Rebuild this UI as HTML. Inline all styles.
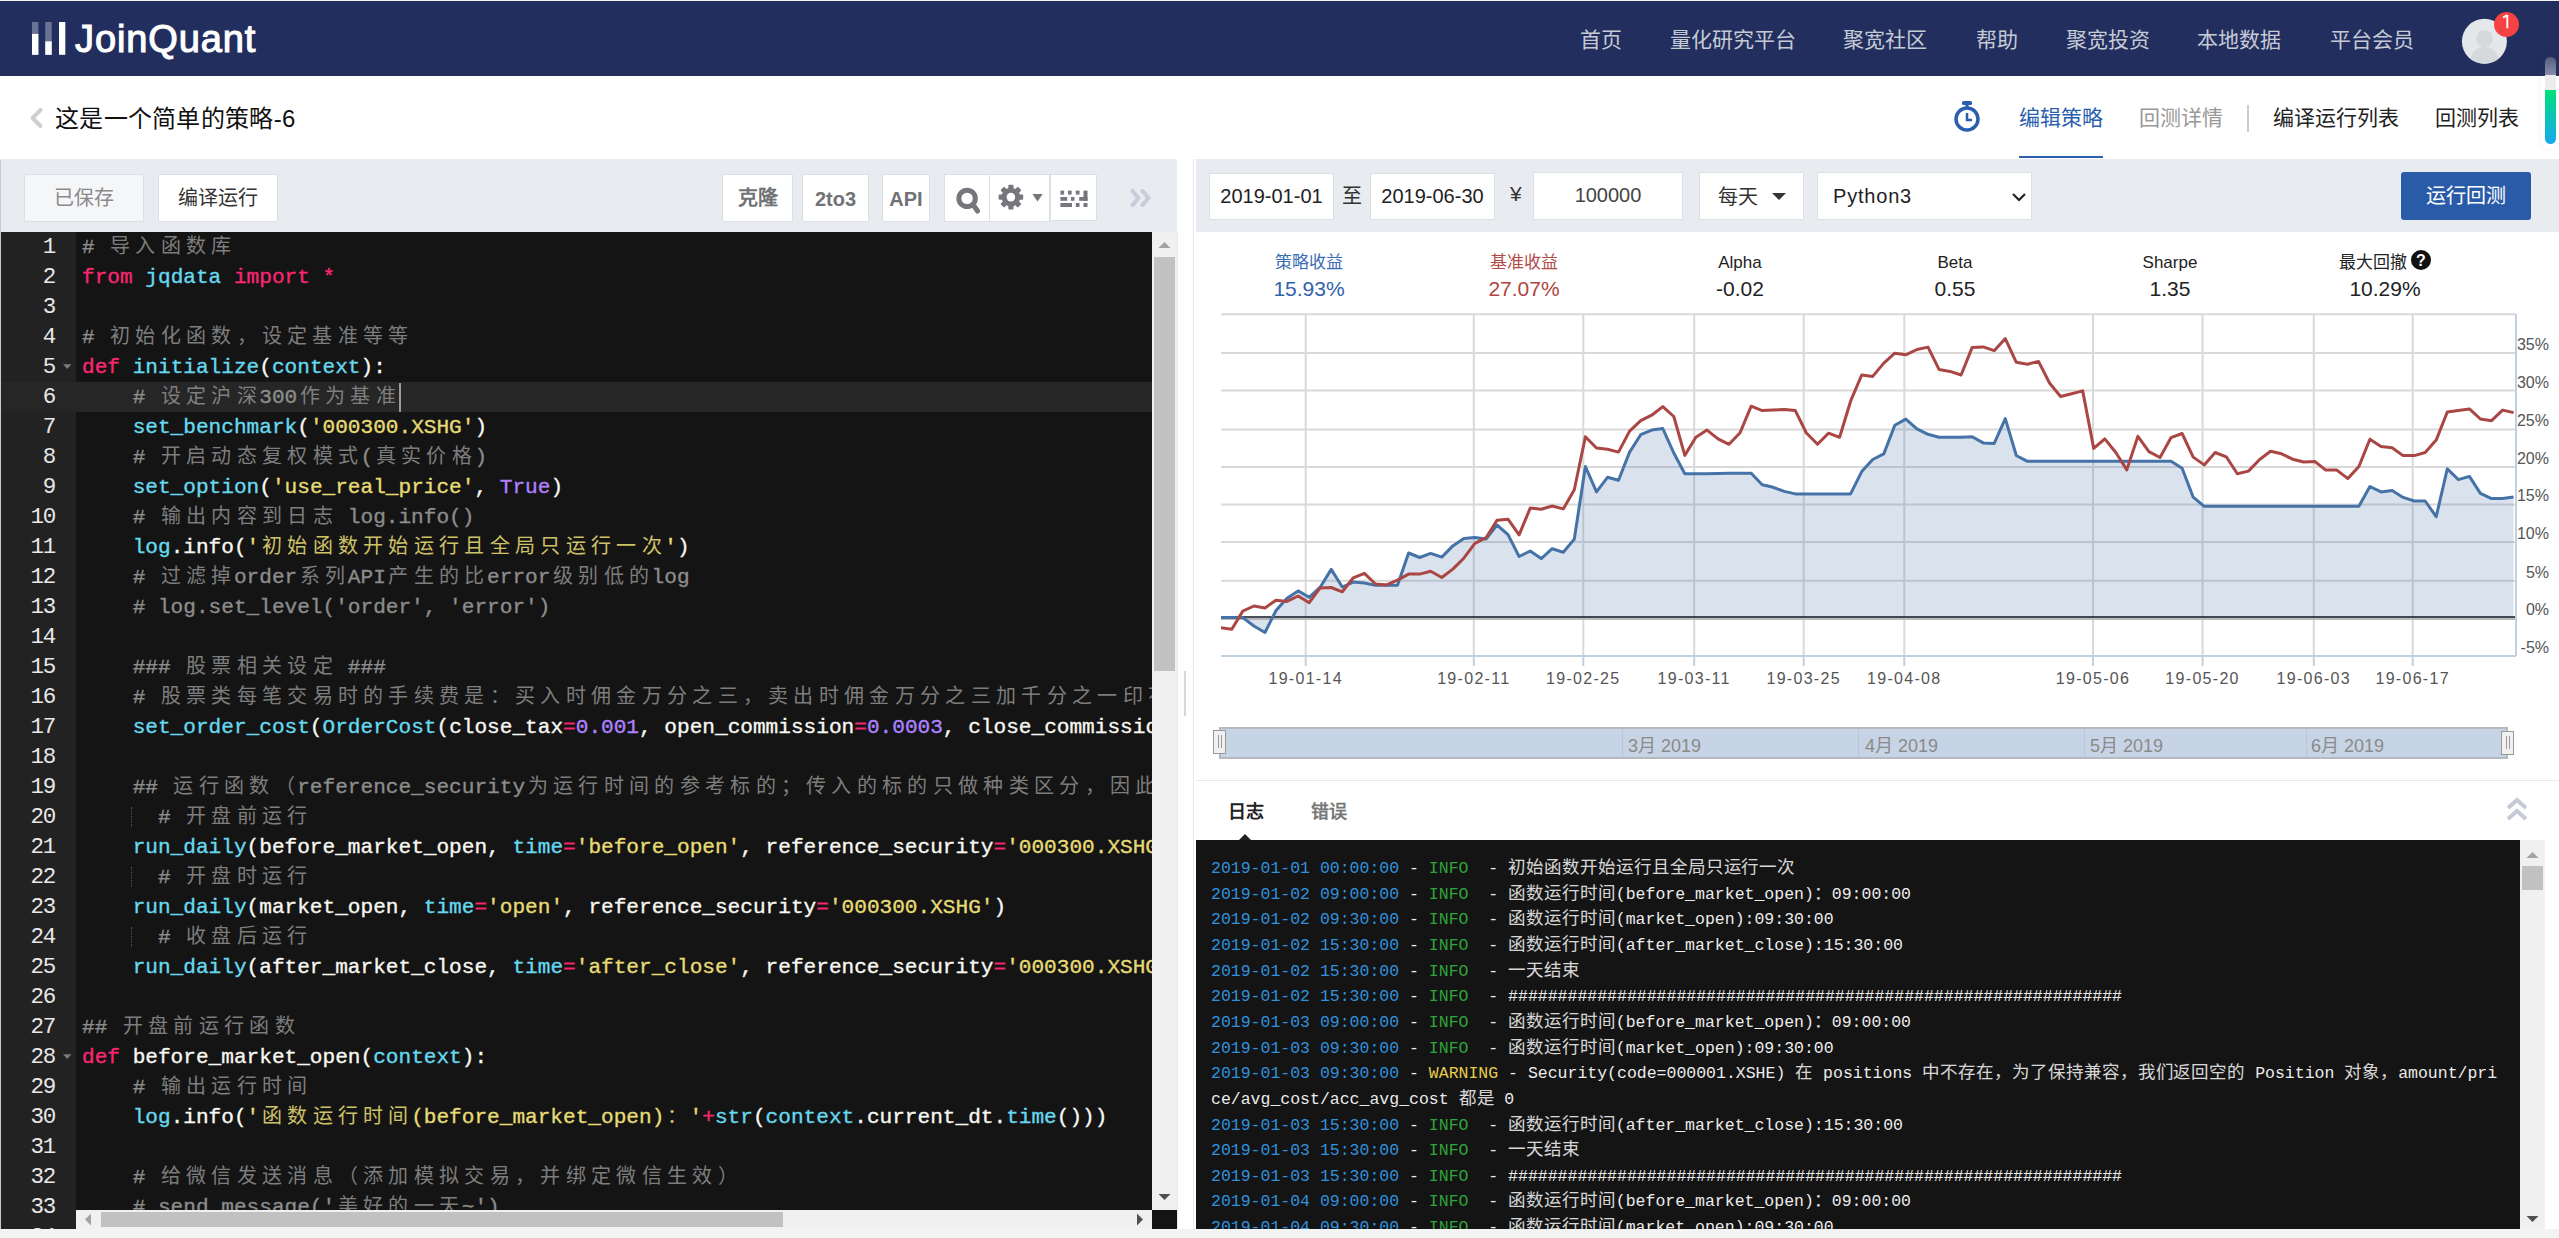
<!DOCTYPE html>
<html lang="zh-CN"><head><meta charset="utf-8"><style>
*{box-sizing:border-box;margin:0;padding:0}
html,body{width:2559px;height:1238px;overflow:hidden;background:#fff;font-family:"Liberation Sans",sans-serif;position:relative}
.a{position:absolute}
/* header */
#hdr{left:0;top:0;width:2559px;height:76px;background:#222f5e;border-top:1px solid #f0f2ee}
.logo{left:32px;top:22px}
.logotxt{left:75px;top:15.5px;color:#fff;font-size:38px;font-weight:normal;letter-spacing:0.9px;line-height:46px;-webkit-text-stroke:1.1px #fff}
.nav{top:26px;color:#c6cad6;font-size:21px;line-height:28px;white-space:nowrap}
.avatar{left:2462px;top:17px;width:46px;height:46px;border-radius:50%;background:#e4e6ea;overflow:hidden}
.badge{left:2494px;top:11.8px;width:25px;height:25px;border-radius:50%;background:#f64242;color:#fff;font-size:16px;line-height:25px;text-align:center}
/* title bar */
.title{left:55px;top:104px;letter-spacing:0.3px;font-size:24px;line-height:30px;color:#111;white-space:nowrap}
.tab{top:104px;font-size:21px;line-height:28px;white-space:nowrap}
/* toolbars */
.tb{background:#e8ebf0}
.btn{background:#fff;border:1px solid #dcdfe4;font-size:20px;text-align:center;color:#333}
/* editor */
#ed{left:1px;top:232px;width:1151px;height:997px;background:#141414;overflow:hidden}
#gut{left:1px;top:232px;width:75px;height:997px;background:#222}
.ln{position:absolute;left:0;width:1151px;height:30px}
.ln.act p{background:#262626}
.ln.act b{background:#262626}
.ln b{position:absolute;left:0;width:75px;height:30px;text-align:right;padding-right:21px;font-weight:normal;color:#e8e8e8;font-family:"Liberation Mono",monospace;font-size:22.5px;line-height:31px;letter-spacing:-1.2px}
.ln p{position:absolute;left:75px;width:1076px;height:30px;padding-left:6px;-webkit-text-stroke:0.35px currentColor;white-space:pre;font-family:"Liberation Mono",monospace;font-size:21.1px;line-height:30px;color:#f8f8f2;overflow:hidden}
.ln p i{font-style:normal;display:inline-block;width:25.32px;text-align:center;font-size:20px;line-height:30px;vertical-align:top;position:relative;top:1px;-webkit-text-stroke:0;opacity:0.88}
.c{color:#8c8c8c}.k{color:#f92672}.f{color:#66d9ef}.s{color:#e6db74}.n{color:#ae81ff}
/* log */
#logp{left:1196px;top:840px;width:1324px;height:389px;background:#141414;overflow:hidden}
.lg{position:absolute;left:15px;margin-top:2.5px;white-space:pre;font-family:"Liberation Mono",monospace;font-size:16.5px;line-height:25px;color:#ececec}
.lg i{font-style:normal;font-size:17.5px;letter-spacing:0.95px;opacity:0.9}
.ld{color:#3191de}.li{color:#2fa43a}.lw{color:#e6cc4a}
/* chart */
svg.chart{position:absolute}
.xl{position:absolute;top:668.5px;width:100px;text-align:center;color:#555;font-size:16px;line-height:20px;letter-spacing:1.3px}
.yl{position:absolute;left:2499px;width:50px;color:#555;font-size:16px;line-height:20px;text-align:right;margin-top:1.5px}
.stl{top:252px;font-size:17px;line-height:22px;text-align:center;width:200px;white-space:nowrap}
.stv{top:276px;font-size:21px;line-height:26px;text-align:center;width:200px;color:#222;white-space:nowrap}
.inp{font-size:20px;line-height:45px;color:#222}
.navl{top:734.5px;font-size:18px;line-height:22px;color:#8a8a8a;white-space:nowrap}

</style></head><body>
<div id="hdr" class="a"></div>
<svg class="a" width="34" height="34" style="left:31.75px;top:22px"><rect x="0" y="0" width="6.4" height="32.8" fill="#6a7396"/><rect x="0" y="11.9" width="6.4" height="20.9" fill="#fff"/><rect x="13.25" y="0" width="6.5" height="32.8" fill="#6a7396"/><rect x="13.25" y="19.4" width="6.5" height="13.4" fill="#fff"/><rect x="27" y="0" width="6.3" height="32.8" fill="#fff"/></svg>
<div class="a logotxt">JoinQuant</div>
<div class="a nav" style="left:1580px">首页</div>
<div class="a nav" style="left:1670px">量化研究平台</div>
<div class="a nav" style="left:1843px">聚宽社区</div>
<div class="a nav" style="left:1976px">帮助</div>
<div class="a nav" style="left:2066px">聚宽投资</div>
<div class="a nav" style="left:2197px">本地数据</div>
<div class="a nav" style="left:2330px">平台会员</div>
<svg class="a" width="50" height="50" style="left:2459px;top:16px"><defs><clipPath id="avc"><circle cx="25.4" cy="25.3" r="22.5"/></clipPath></defs><circle cx="25.4" cy="25.3" r="22.5" fill="#e5e8eb"/><g clip-path="url(#avc)" fill="#d6d9dc"><circle cx="25.5" cy="22.6" r="8.4"/><ellipse cx="25.5" cy="46" rx="14.3" ry="15.5"/></g></svg>
<div class="a badge"></div><svg class="a" width="12" height="18" style="left:2500px;top:12px"><path d="M7.3,2.9 V16.2 M7.3,3 L3.2,5.6" fill="none" stroke="#fff" stroke-width="1.9"/></svg>

<!-- title bar -->
<svg class="a" width="16" height="24" style="left:28px;top:106px"><polyline points="12.5,4 4.5,12 12.5,20" fill="none" stroke="#cfcfcf" stroke-width="4" stroke-linecap="round" stroke-linejoin="round"/></svg>
<div class="a title">这是一个简单的策略-6</div>
<svg class="a" width="32" height="36" style="left:1951px;top:100px"><circle cx="16" cy="19" r="11" fill="none" stroke="#2b5fad" stroke-width="3.5"/><rect x="11" y="1" width="10" height="4" rx="1.5" fill="#2b5fad"/><rect x="14.5" y="4" width="3" height="4" fill="#2b5fad"/><polyline points="16,13 16,20 21,20" fill="none" stroke="#2b5fad" stroke-width="2.5"/></svg>
<div class="a tab" style="left:2019px;color:#2b5fad">编辑策略</div>
<div class="a" style="left:2019px;top:156px;width:84px;height:2px;background:#2b5fad"></div>
<div class="a tab" style="left:2139px;color:#999">回测详情</div>
<div class="a" style="left:2247px;top:105px;width:2px;height:27px;background:#ccc"></div>
<div class="a tab" style="left:2273px;color:#222">编译运行列表</div>
<div class="a tab" style="left:2435px;color:#222">回测列表</div>

<!-- left toolbar -->
<div class="a tb" style="left:0;top:159px;width:1177px;height:73px"></div>
<div class="a" style="left:0;top:160px;width:1px;height:1069px;background:#cacaca"></div>
<div class="a btn" style="left:24px;top:174px;width:120px;height:48px;line-height:46px;background:#f5f6f8;color:#8a8a8a">已保存</div>
<div class="a btn" style="left:158px;top:174px;width:120px;height:48px;line-height:46px">编译运行</div>
<div class="a btn" style="left:722px;top:174px;width:71px;height:48px;line-height:47px;color:#707276;font-weight:bold">克隆</div>
<div class="a btn" style="left:802px;top:174px;width:67px;height:48px;line-height:49px;color:#707276;font-weight:bold">2to3</div>
<div class="a btn" style="left:882px;top:174px;width:48px;height:48px;line-height:49px;color:#707276;font-weight:bold">API</div>
<div class="a btn" style="left:944px;top:174px;width:46px;height:48px"></div>
<div class="a btn" style="left:989px;top:174px;width:61px;height:48px"></div>
<div class="a btn" style="left:1050px;top:174px;width:47px;height:47px"></div>
<svg class="a" width="160" height="50" style="left:940px;top:172px">
<circle cx="27.1" cy="26.4" r="8.2" fill="none" stroke="#76777c" stroke-width="5"/>
<line x1="33" y1="32.5" x2="37.5" y2="39" stroke="#76777c" stroke-width="5" stroke-linecap="round"/>
<g transform="translate(70.9,25.1)" fill="#76777c">
<circle r="9.3"/>
<rect x="-2.6" y="-12.3" width="5.2" height="24.6" rx="1"/>
<rect x="-2.6" y="-12.3" width="5.2" height="24.6" rx="1" transform="rotate(45)"/>
<rect x="-2.6" y="-12.3" width="5.2" height="24.6" rx="1" transform="rotate(90)"/>
<rect x="-2.6" y="-12.3" width="5.2" height="24.6" rx="1" transform="rotate(135)"/>
<circle r="4.3" fill="#fff"/>
</g>
<polygon points="92.4,22 102.7,22 97.5,29.4" fill="#76777c"/>
<g fill="#76777c">
<rect x="120.4" y="18.6" width="3.7" height="4"/><rect x="128" y="18.6" width="3.6" height="4"/><rect x="135.8" y="18.6" width="3.7" height="4"/><rect x="143.5" y="18.6" width="4" height="10.2"/>
<rect x="120.4" y="25" width="6.8" height="3.8"/><rect x="131" y="25" width="3.5" height="3.8"/><rect x="139.2" y="25" width="8.3" height="3.8"/>
<rect x="120.4" y="31" width="11.6" height="4"/><rect x="135.8" y="31" width="3.7" height="4"/><rect x="143.5" y="31" width="4" height="4"/>
</g>
</svg>
<svg class="a" width="26" height="24" style="left:1128px;top:186px"><polyline points="4.5,5 10.5,12 4.5,19" fill="none" stroke="#c8ccda" stroke-width="4.2" stroke-linecap="round" stroke-linejoin="round"/><polyline points="14.5,5 20.5,12 14.5,19" fill="none" stroke="#c8ccda" stroke-width="4.2" stroke-linecap="round" stroke-linejoin="round"/></svg>


<!-- editor -->
<div id="ed" class="a">
<div id="gut" class="a" style="left:0;top:0"></div>
<div class="a" style="left:0;top:0;width:1151px;height:997px">
<div class="ln" style="top:0px"><b>1</b><p><span class="c"># <i>导</i><i>入</i><i>函</i><i>数</i><i>库</i></span></p></div>
<div class="ln" style="top:30px"><b>2</b><p><span class="k">from</span> <span class="f">jqdata</span> <span class="k">import</span> <span class="k">*</span></p></div>
<div class="ln" style="top:60px"><b>3</b><p></p></div>
<div class="ln" style="top:90px"><b>4</b><p><span class="c"># <i>初</i><i>始</i><i>化</i><i>函</i><i>数</i><i>，</i><i>设</i><i>定</i><i>基</i><i>准</i><i>等</i><i>等</i></span></p></div>
<div class="ln" style="top:120px"><b>5</b><p><span class="k">def</span> <span class="f">initialize</span>(<span class="f">context</span>):</p></div>
<div class="ln act" style="top:150px"><b>6</b><p>    <span class="c"># <i>设</i><i>定</i><i>沪</i><i>深</i>300<i>作</i><i>为</i><i>基</i><i>准</i></span></p></div>
<div class="ln" style="top:180px"><b>7</b><p>    <span class="f">set_benchmark</span>(<span class="s">'000300.XSHG'</span>)</p></div>
<div class="ln" style="top:210px"><b>8</b><p>    <span class="c"># <i>开</i><i>启</i><i>动</i><i>态</i><i>复</i><i>权</i><i>模</i><i>式</i>(<i>真</i><i>实</i><i>价</i><i>格</i>)</span></p></div>
<div class="ln" style="top:240px"><b>9</b><p>    <span class="f">set_option</span>(<span class="s">'use_real_price'</span>, <span class="n">True</span>)</p></div>
<div class="ln" style="top:270px"><b>10</b><p>    <span class="c"># <i>输</i><i>出</i><i>内</i><i>容</i><i>到</i><i>日</i><i>志</i> log.info()</span></p></div>
<div class="ln" style="top:300px"><b>11</b><p>    <span class="f">log</span>.info(<span class="s">'<i>初</i><i>始</i><i>函</i><i>数</i><i>开</i><i>始</i><i>运</i><i>行</i><i>且</i><i>全</i><i>局</i><i>只</i><i>运</i><i>行</i><i>一</i><i>次</i>'</span>)</p></div>
<div class="ln" style="top:330px"><b>12</b><p>    <span class="c"># <i>过</i><i>滤</i><i>掉</i>order<i>系</i><i>列</i>API<i>产</i><i>生</i><i>的</i><i>比</i>error<i>级</i><i>别</i><i>低</i><i>的</i>log</span></p></div>
<div class="ln" style="top:360px"><b>13</b><p>    <span class="c"># log.set_level('order', 'error')</span></p></div>
<div class="ln" style="top:390px"><b>14</b><p></p></div>
<div class="ln" style="top:420px"><b>15</b><p>    <span class="c">### <i>股</i><i>票</i><i>相</i><i>关</i><i>设</i><i>定</i> ###</span></p></div>
<div class="ln" style="top:450px"><b>16</b><p>    <span class="c"># <i>股</i><i>票</i><i>类</i><i>每</i><i>笔</i><i>交</i><i>易</i><i>时</i><i>的</i><i>手</i><i>续</i><i>费</i><i>是</i><i>：</i><i>买</i><i>入</i><i>时</i><i>佣</i><i>金</i><i>万</i><i>分</i><i>之</i><i>三</i><i>，</i><i>卖</i><i>出</i><i>时</i><i>佣</i><i>金</i><i>万</i><i>分</i><i>之</i><i>三</i><i>加</i><i>千</i><i>分</i><i>之</i><i>一</i><i>印</i><i>花</i><i>税</i>, <i>每</i><i>笔</i><i>交</i><i>易</i><i>佣</i><i>金</i><i>最</i><i>低</i><i>扣</i>5<i>块</i><i>钱</i></span></p></div>
<div class="ln" style="top:480px"><b>17</b><p>    <span class="f">set_order_cost</span>(<span class="f">OrderCost</span>(close_tax<span class="k">=</span><span class="n">0.001</span>, open_commission<span class="k">=</span><span class="n">0.0003</span>, close_commission<span class="k">=</span><span class="n">0.0003</span>, min_commission<span class="k">=</span><span class="n">5</span>), type<span class="k">=</span><span class="s">'stock'</span>)</p></div>
<div class="ln" style="top:510px"><b>18</b><p></p></div>
<div class="ln" style="top:540px"><b>19</b><p>    <span class="c">## <i>运</i><i>行</i><i>函</i><i>数</i><i>（</i>reference_security<i>为</i><i>运</i><i>行</i><i>时</i><i>间</i><i>的</i><i>参</i><i>考</i><i>标</i><i>的</i><i>；</i><i>传</i><i>入</i><i>的</i><i>标</i><i>的</i><i>只</i><i>做</i><i>种</i><i>类</i><i>区</i><i>分</i><i>，</i><i>因</i><i>此</i><i>传</i><i>入</i>'000300.XSHG'<i>或</i>'510300.XSHG'<i>是</i><i>一</i><i>样</i><i>的</i><i>）</i></span></p></div>
<div class="ln" style="top:570px"><b>20</b><p>      <span class="c"># <i>开</i><i>盘</i><i>前</i><i>运</i><i>行</i></span></p></div>
<div class="ln" style="top:600px"><b>21</b><p>    <span class="f">run_daily</span>(before_market_open, <span class="f">time</span><span class="k">=</span><span class="s">'before_open'</span>, reference_security<span class="k">=</span><span class="s">'000300.XSHG'</span>)</p></div>
<div class="ln" style="top:630px"><b>22</b><p>      <span class="c"># <i>开</i><i>盘</i><i>时</i><i>运</i><i>行</i></span></p></div>
<div class="ln" style="top:660px"><b>23</b><p>    <span class="f">run_daily</span>(market_open, <span class="f">time</span><span class="k">=</span><span class="s">'open'</span>, reference_security<span class="k">=</span><span class="s">'000300.XSHG'</span>)</p></div>
<div class="ln" style="top:690px"><b>24</b><p>      <span class="c"># <i>收</i><i>盘</i><i>后</i><i>运</i><i>行</i></span></p></div>
<div class="ln" style="top:720px"><b>25</b><p>    <span class="f">run_daily</span>(after_market_close, <span class="f">time</span><span class="k">=</span><span class="s">'after_close'</span>, reference_security<span class="k">=</span><span class="s">'000300.XSHG'</span>)</p></div>
<div class="ln" style="top:750px"><b>26</b><p></p></div>
<div class="ln" style="top:780px"><b>27</b><p><span class="c">## <i>开</i><i>盘</i><i>前</i><i>运</i><i>行</i><i>函</i><i>数</i></span></p></div>
<div class="ln" style="top:810px"><b>28</b><p><span class="k">def</span> before_market_open(<span class="f">context</span>):</p></div>
<div class="ln" style="top:840px"><b>29</b><p>    <span class="c"># <i>输</i><i>出</i><i>运</i><i>行</i><i>时</i><i>间</i></span></p></div>
<div class="ln" style="top:870px"><b>30</b><p>    <span class="f">log</span>.info(<span class="s">'<i>函</i><i>数</i><i>运</i><i>行</i><i>时</i><i>间</i>(before_market_open)<i>：</i>'</span><span class="k">+</span><span class="f">str</span>(<span class="f">context</span>.current_dt.<span class="f">time</span>()))</p></div>
<div class="ln" style="top:900px"><b>31</b><p></p></div>
<div class="ln" style="top:930px"><b>32</b><p>    <span class="c"># <i>给</i><i>微</i><i>信</i><i>发</i><i>送</i><i>消</i><i>息</i><i>（</i><i>添</i><i>加</i><i>模</i><i>拟</i><i>交</i><i>易</i><i>，</i><i>并</i><i>绑</i><i>定</i><i>微</i><i>信</i><i>生</i><i>效</i><i>）</i></span></p></div>
<div class="ln" style="top:960px"><b>33</b><p>    <span class="c"># send_message('<i>美</i><i>好</i><i>的</i><i>一</i><i>天</i>~')</span></p></div>
<div class="ln" style="top:990px"><b>34</b><p></p></div>
<svg class="a" width="12" height="8" style="left:61px;top:131px"><polygon points="1,1.2 9.5,1.2 5.25,6" fill="#7a7a7a"/></svg>
<svg class="a" width="12" height="8" style="left:61px;top:821px"><polygon points="1,1.2 9.5,1.2 5.25,6" fill="#7a7a7a"/></svg>
<div class="a" style="left:398px;top:151px;width:2px;height:29px;background:#9a9a9a"></div>
<div class="a" style="left:130px;top:575px;width:0;height:20px;border-left:1px dotted #555"></div>
<div class="a" style="left:130px;top:635px;width:0;height:20px;border-left:1px dotted #555"></div>
<div class="a" style="left:130px;top:695px;width:0;height:20px;border-left:1px dotted #555"></div>
</div>
</div>
<!-- editor scrollbars -->
<div class="a" style="left:1152px;top:232px;width:25px;height:978px;background:#f0f0f0"></div>
<div class="a" style="left:1154px;top:257px;width:21px;height:414px;background:#c1c1c1"></div>
<div class="a" style="left:76px;top:1210px;width:1076px;height:19px;background:#f0f0f0"></div>
<div class="a" style="left:101px;top:1212px;width:682px;height:15px;background:#c1c1c1"></div>
<div class="a" style="left:1152px;top:1210px;width:25px;height:19px;background:#141414"></div>
<div class="a" style="left:0;top:1229px;width:2559px;height:9px;background:#f3f3f3"></div>

<svg class="a" width="25" height="20" style="left:1152px;top:234px"><polygon points="6.5,14 18.5,14 12.5,8" fill="#a3a3a3"/></svg>
<svg class="a" width="25" height="20" style="left:1152px;top:1188px"><polygon points="6.5,6 18.5,6 12.5,12" fill="#505050"/></svg>
<svg class="a" width="20" height="19" style="left:76px;top:1210px"><polygon points="15,3.5 15,15.5 9,9.5" fill="#a3a3a3"/></svg>
<svg class="a" width="20" height="19" style="left:1130px;top:1210px"><polygon points="7,3.5 7,15.5 13,9.5" fill="#505050"/></svg>
<!-- splitter -->
<div class="a" style="left:1184px;top:671px;width:2px;height:45px;background:#d4d8de"></div>
<div class="a" style="left:1193px;top:159px;width:1px;height:1070px;background:#e6eaf0"></div>
<div class="a" style="left:1177px;top:232px;width:1px;height:997px;background:#e6eaf0"></div>

<!-- right toolbar -->
<div class="a tb" style="left:1196px;top:159px;width:1363px;height:73px"></div>
<div class="a btn inp" style="left:1209px;top:173px;width:125px;height:47px">2019-01-01</div>
<div class="a" style="left:1342px;top:183px;font-size:20px;line-height:26px;color:#333">至</div>
<div class="a btn inp" style="left:1370px;top:173px;width:125px;height:47px">2019-06-30</div>
<div class="a" style="left:1510px;top:181px;font-size:21px;line-height:26px;color:#333">¥</div>
<div class="a btn inp" style="left:1533px;top:172px;width:150px;height:48px;color:#444">100000</div>
<div class="a btn" style="left:1699px;top:172px;width:105px;height:48px"></div>
<div class="a" style="left:1718px;top:183px;font-size:20px;line-height:28px;color:#333">每天</div>
<svg class="a" width="14" height="8" style="left:1772px;top:193px"><polygon points="0,0 14,0 7,7" fill="#333"/></svg>
<div class="a btn" style="left:1817px;top:172px;width:215px;height:48px"></div>
<div class="a" style="left:1833px;top:182px;font-size:20px;line-height:28px;color:#222;letter-spacing:0.8px">Python3</div>
<svg class="a" width="16" height="10" style="left:2011px;top:192px"><polyline points="2,2 8,8 14,2" fill="none" stroke="#222" stroke-width="2.2"/></svg>
<div class="a" style="left:2401px;top:172px;width:130px;height:48px;background:#2a5ba8;border-radius:3px;color:#fff;font-size:20px;line-height:48px;text-align:center">运行回测</div>


<!-- stats -->
<div class="a stl" style="left:1209px;color:#3a6db3">策略收益</div>
<div class="a stv" style="left:1209px;color:#2f63ad">15.93%</div>
<div class="a stl" style="left:1424px;color:#b24a48">基准收益</div>
<div class="a stv" style="left:1424px;color:#b04441">27.07%</div>
<div class="a stl" style="left:1640px;color:#222">Alpha</div>
<div class="a stv" style="left:1640px">-0.02</div>
<div class="a stl" style="left:1855px;color:#222">Beta</div>
<div class="a stv" style="left:1855px">0.55</div>
<div class="a stl" style="left:2070px;color:#222">Sharpe</div>
<div class="a stv" style="left:2070px">1.35</div>
<div class="a stl" style="left:2273px;color:#222">最大回撤</div>
<div class="a stv" style="left:2285px">10.29%</div>
<svg class="a" width="22" height="22" style="left:2410px;top:249px"><circle cx="11" cy="11" r="10" fill="#111"/><text x="11" y="17" font-size="16" font-weight="bold" fill="#fff" text-anchor="middle" font-family="Liberation Sans">?</text></svg>


<svg class="chart" width="1363" height="480" style="left:1196px;top:300px">
<defs><clipPath id="pc"><rect x="25.0" y="14.0" width="1295.0" height="342.0"/></clipPath></defs>
<line x1="25.0" y1="14.2" x2="1320.0" y2="14.2" stroke="#d9d9d9" stroke-width="2"/>
<line x1="25.0" y1="53.0" x2="1320.0" y2="53.0" stroke="#d9d9d9" stroke-width="2"/>
<line x1="25.0" y1="90.6" x2="1320.0" y2="90.6" stroke="#d9d9d9" stroke-width="2"/>
<line x1="25.0" y1="129.4" x2="1320.0" y2="129.4" stroke="#d9d9d9" stroke-width="2"/>
<line x1="25.0" y1="167.0" x2="1320.0" y2="167.0" stroke="#d9d9d9" stroke-width="2"/>
<line x1="25.0" y1="204.4" x2="1320.0" y2="204.4" stroke="#d9d9d9" stroke-width="2"/>
<line x1="25.0" y1="241.9" x2="1320.0" y2="241.9" stroke="#d9d9d9" stroke-width="2"/>
<line x1="25.0" y1="280.8" x2="1320.0" y2="280.8" stroke="#d9d9d9" stroke-width="2"/>
<line x1="25.0" y1="319.0" x2="1320.0" y2="319.0" stroke="#d9d9d9" stroke-width="2"/>
<line x1="109.7" y1="14.0" x2="109.7" y2="356.0" stroke="#d9d9d9" stroke-width="2"/>
<line x1="109.7" y1="356.0" x2="109.7" y2="366.0" stroke="#c0d0e0" stroke-width="2"/>
<line x1="277.8" y1="14.0" x2="277.8" y2="356.0" stroke="#d9d9d9" stroke-width="2"/>
<line x1="277.8" y1="356.0" x2="277.8" y2="366.0" stroke="#c0d0e0" stroke-width="2"/>
<line x1="387.3" y1="14.0" x2="387.3" y2="356.0" stroke="#d9d9d9" stroke-width="2"/>
<line x1="387.3" y1="356.0" x2="387.3" y2="366.0" stroke="#c0d0e0" stroke-width="2"/>
<line x1="498.2" y1="14.0" x2="498.2" y2="356.0" stroke="#d9d9d9" stroke-width="2"/>
<line x1="498.2" y1="356.0" x2="498.2" y2="366.0" stroke="#c0d0e0" stroke-width="2"/>
<line x1="607.7" y1="14.0" x2="607.7" y2="356.0" stroke="#d9d9d9" stroke-width="2"/>
<line x1="607.7" y1="356.0" x2="607.7" y2="366.0" stroke="#c0d0e0" stroke-width="2"/>
<line x1="708.3" y1="14.0" x2="708.3" y2="356.0" stroke="#d9d9d9" stroke-width="2"/>
<line x1="708.3" y1="356.0" x2="708.3" y2="366.0" stroke="#c0d0e0" stroke-width="2"/>
<line x1="897.0" y1="14.0" x2="897.0" y2="356.0" stroke="#d9d9d9" stroke-width="2"/>
<line x1="897.0" y1="356.0" x2="897.0" y2="366.0" stroke="#c0d0e0" stroke-width="2"/>
<line x1="1006.6" y1="14.0" x2="1006.6" y2="356.0" stroke="#d9d9d9" stroke-width="2"/>
<line x1="1006.6" y1="356.0" x2="1006.6" y2="366.0" stroke="#c0d0e0" stroke-width="2"/>
<line x1="1117.8" y1="14.0" x2="1117.8" y2="356.0" stroke="#d9d9d9" stroke-width="2"/>
<line x1="1117.8" y1="356.0" x2="1117.8" y2="366.0" stroke="#c0d0e0" stroke-width="2"/>
<line x1="1216.7" y1="14.0" x2="1216.7" y2="356.0" stroke="#d9d9d9" stroke-width="2"/>
<line x1="1216.7" y1="356.0" x2="1216.7" y2="366.0" stroke="#c0d0e0" stroke-width="2"/>
<g clip-path="url(#pc)">
<path d="M24.8,317.7 L24.8,317.6 L35.8,317.6 L46.8,317.6 L57.9,326.0 L69.0,332.5 L80.0,310.5 L91.0,298.2 L102.1,290.9 L113.2,297.3 L124.2,287.2 L135.2,269.4 L146.3,287.0 L157.3,282.1 L168.4,283.0 L179.5,285.3 L190.5,285.3 L201.5,285.3 L212.6,253.0 L223.7,257.5 L234.7,253.4 L245.8,257.1 L256.8,245.9 L267.8,238.4 L278.9,237.6 L290.0,239.1 L301.0,225.0 L312.0,234.6 L323.1,256.5 L334.2,251.0 L345.2,258.6 L356.2,248.7 L367.3,252.3 L378.3,239.1 L389.4,166.5 L400.5,191.9 L411.5,177.3 L422.5,180.3 L433.6,152.1 L444.7,134.7 L455.7,130.1 L466.8,128.6 L477.8,153.0 L488.8,173.7 L499.9,173.7 L511.0,173.7 L522.0,173.5 L533.0,173.2 L544.1,173.2 L555.2,173.2 L566.2,184.8 L577.2,187.3 L588.3,191.4 L599.3,193.9 L610.4,193.9 L621.5,193.9 L632.5,193.9 L643.6,193.9 L654.6,193.9 L665.7,171.6 L676.7,159.5 L687.8,153.9 L698.8,125.2 L709.8,119.1 L720.9,128.9 L732.0,134.3 L743.0,137.3 L754.1,137.3 L765.1,137.3 L776.2,136.8 L787.2,142.9 L798.2,143.4 L809.3,118.6 L820.3,155.5 L831.4,161.3 L842.5,161.3 L853.5,161.3 L864.6,161.3 L875.6,161.3 L886.7,161.3 L897.7,161.3 L908.8,161.3 L919.8,161.3 L930.8,161.3 L941.9,161.3 L952.9,161.3 L964.0,161.3 L975.1,161.3 L986.1,168.2 L997.2,197.2 L1008.2,206.3 L1019.2,206.2 L1030.3,206.2 L1041.3,206.2 L1052.4,206.2 L1063.4,206.2 L1074.5,206.2 L1085.6,206.2 L1096.6,206.2 L1107.7,206.2 L1118.7,206.2 L1129.8,206.2 L1140.8,206.2 L1151.9,206.2 L1162.9,206.2 L1173.9,186.5 L1185.0,191.9 L1196.1,190.5 L1207.1,197.4 L1218.2,201.0 L1229.2,201.0 L1240.2,216.7 L1251.3,168.9 L1262.4,179.6 L1273.4,176.4 L1284.4,193.4 L1295.5,198.6 L1306.6,198.6 L1317.6,197.0 L1317.6,317.7 Z" fill="rgba(69,114,167,0.2)" stroke="none"/>
</g>
<line x1="25.0" y1="319.0" x2="1320.0" y2="319.0" stroke="#b0b0b0" stroke-width="1.4"/>
<line x1="25.0" y1="317.1" x2="1320.0" y2="317.1" stroke="#0f1420" stroke-width="1.5"/>
<line x1="25.0" y1="356.0" x2="1320.0" y2="356.0" stroke="#c0d0e0" stroke-width="2"/>
<line x1="1320.0" y1="14.0" x2="1320.0" y2="356.0" stroke="#c0d0e0" stroke-width="2"/>
<g clip-path="url(#pc)">
<polyline points="24.8,317.6 35.8,317.6 46.8,317.6 57.9,326.0 69.0,332.5 80.0,310.5 91.0,298.2 102.1,290.9 113.2,297.3 124.2,287.2 135.2,269.4 146.3,287.0 157.3,282.1 168.4,283.0 179.5,285.3 190.5,285.3 201.5,285.3 212.6,253.0 223.7,257.5 234.7,253.4 245.8,257.1 256.8,245.9 267.8,238.4 278.9,237.6 290.0,239.1 301.0,225.0 312.0,234.6 323.1,256.5 334.2,251.0 345.2,258.6 356.2,248.7 367.3,252.3 378.3,239.1 389.4,166.5 400.5,191.9 411.5,177.3 422.5,180.3 433.6,152.1 444.7,134.7 455.7,130.1 466.8,128.6 477.8,153.0 488.8,173.7 499.9,173.7 511.0,173.7 522.0,173.5 533.0,173.2 544.1,173.2 555.2,173.2 566.2,184.8 577.2,187.3 588.3,191.4 599.3,193.9 610.4,193.9 621.5,193.9 632.5,193.9 643.6,193.9 654.6,193.9 665.7,171.6 676.7,159.5 687.8,153.9 698.8,125.2 709.8,119.1 720.9,128.9 732.0,134.3 743.0,137.3 754.1,137.3 765.1,137.3 776.2,136.8 787.2,142.9 798.2,143.4 809.3,118.6 820.3,155.5 831.4,161.3 842.5,161.3 853.5,161.3 864.6,161.3 875.6,161.3 886.7,161.3 897.7,161.3 908.8,161.3 919.8,161.3 930.8,161.3 941.9,161.3 952.9,161.3 964.0,161.3 975.1,161.3 986.1,168.2 997.2,197.2 1008.2,206.3 1019.2,206.2 1030.3,206.2 1041.3,206.2 1052.4,206.2 1063.4,206.2 1074.5,206.2 1085.6,206.2 1096.6,206.2 1107.7,206.2 1118.7,206.2 1129.8,206.2 1140.8,206.2 1151.9,206.2 1162.9,206.2 1173.9,186.5 1185.0,191.9 1196.1,190.5 1207.1,197.4 1218.2,201.0 1229.2,201.0 1240.2,216.7 1251.3,168.9 1262.4,179.6 1273.4,176.4 1284.4,193.4 1295.5,198.6 1306.6,198.6 1317.6,197.0" fill="none" stroke="#4572a7" stroke-width="3" stroke-linejoin="round"/>
<polyline points="24.8,327.7 35.8,329.2 46.8,311.1 57.9,306.0 69.0,307.9 80.0,300.2 91.0,301.4 102.1,296.0 113.2,302.7 124.2,287.9 135.2,287.5 146.3,291.8 157.3,277.8 168.4,273.3 179.5,284.0 190.5,284.9 201.5,280.1 212.6,274.1 223.7,274.1 234.7,271.3 245.8,277.5 256.8,269.1 267.8,258.2 278.9,243.3 290.0,237.7 301.0,220.3 312.0,219.2 323.1,234.9 334.2,208.1 345.2,209.3 356.2,206.0 367.3,208.9 378.3,189.7 389.4,136.7 400.5,148.0 411.5,149.3 422.5,152.1 433.6,131.1 444.7,120.7 455.7,115.2 466.8,106.6 477.8,116.5 488.8,155.4 499.9,137.2 511.0,130.1 522.0,138.9 533.0,144.3 544.1,132.7 555.2,106.2 566.2,110.6 577.2,110.0 588.3,109.5 599.3,110.6 610.4,133.0 621.5,144.3 632.5,133.2 643.6,137.3 654.6,101.2 665.7,75.0 676.7,76.4 687.8,63.1 698.8,53.2 709.8,54.8 720.9,49.5 732.0,47.1 743.0,69.4 754.1,71.4 765.1,75.0 776.2,47.4 787.2,46.9 798.2,50.7 809.3,38.6 820.3,62.3 831.4,64.2 842.5,61.4 853.5,83.0 864.6,96.5 875.6,93.7 886.7,90.9 897.7,148.4 908.8,138.9 919.8,152.5 930.8,169.9 941.9,136.3 952.9,151.7 964.0,157.5 975.1,137.6 986.1,133.5 997.2,157.1 1008.2,164.9 1019.2,152.5 1030.3,156.8 1041.3,173.7 1052.4,171.1 1063.4,159.8 1074.5,151.3 1085.6,153.8 1096.6,159.2 1107.7,162.0 1118.7,161.4 1129.8,170.1 1140.8,170.1 1151.9,178.6 1162.9,166.5 1173.9,139.2 1185.0,146.5 1196.1,147.7 1207.1,155.6 1218.2,155.6 1229.2,152.5 1240.2,140.1 1251.3,112.0 1262.4,110.5 1273.4,108.9 1284.4,119.0 1295.5,120.7 1306.6,110.1 1317.6,112.6" fill="none" stroke="#aa4643" stroke-width="3" stroke-linejoin="round"/>
</g>
</svg><div class="xl" style="left:1255.7px">19-01-14</div>
<div class="xl" style="left:1423.8px">19-02-11</div>
<div class="xl" style="left:1533.3px">19-02-25</div>
<div class="xl" style="left:1644.2px">19-03-11</div>
<div class="xl" style="left:1753.7px">19-03-25</div>
<div class="xl" style="left:1854.3px">19-04-08</div>
<div class="xl" style="left:2043.0px">19-05-06</div>
<div class="xl" style="left:2152.6px">19-05-20</div>
<div class="xl" style="left:2263.8px">19-06-03</div>
<div class="xl" style="left:2362.7px">19-06-17</div>
<div class="yl" style="top:333.0px">35%</div>
<div class="yl" style="top:371.0px">30%</div>
<div class="yl" style="top:409.0px">25%</div>
<div class="yl" style="top:447.0px">20%</div>
<div class="yl" style="top:484.0px">15%</div>
<div class="yl" style="top:522.0px">10%</div>
<div class="yl" style="top:561.0px">5%</div>
<div class="yl" style="top:598.0px">0%</div>
<div class="yl" style="top:636.0px">-5%</div>

<!-- navigator -->
<div class="a" style="left:1219px;top:727px;width:1289px;height:32px;background:#c7d4e5;border:2px solid #b6b9c0"></div>
<div class="a" style="left:1622px;top:729px;width:1px;height:28px;background:#b9c6d8"></div>
<div class="a" style="left:1858px;top:729px;width:1px;height:28px;background:#b9c6d8"></div>
<div class="a" style="left:2084px;top:729px;width:1px;height:28px;background:#b9c6d8"></div>
<div class="a" style="left:2306px;top:729px;width:1px;height:28px;background:#b9c6d8"></div>
<div class="a navl" style="left:1628px">3月 2019</div>
<div class="a navl" style="left:1865px">4月 2019</div>
<div class="a navl" style="left:2090px">5月 2019</div>
<div class="a navl" style="left:2311px">6月 2019</div>
<div class="a" style="left:1213px;top:730px;width:13px;height:24px;background:#f0f0f0;border:1px solid #999"></div>
<div class="a" style="left:1218px;top:735px;width:1px;height:13px;background:#999"></div>
<div class="a" style="left:1221px;top:735px;width:1px;height:13px;background:#999"></div>
<div class="a" style="left:2501px;top:731px;width:13px;height:24px;background:#f0f0f0;border:1px solid #999"></div>
<div class="a" style="left:2506px;top:736px;width:1px;height:13px;background:#999"></div>
<div class="a" style="left:2509px;top:736px;width:1px;height:13px;background:#999"></div>
<svg class="a" width="24" height="26" style="left:2505px;top:796px"><polyline points="3,12 12,4 21,12" fill="none" stroke="#c5cad6" stroke-width="4"/><polyline points="3,23 12,15 21,23" fill="none" stroke="#c5cad6" stroke-width="4"/></svg>
<svg class="a" width="12" height="6" style="left:1239px;top:834px"><polygon points="0,6 6,0 12,6" fill="#222"/></svg>


<!-- log -->
<div class="a" style="left:1196px;top:780px;width:1363px;height:1px;background:#e6e9ee"></div>
<div class="a" style="left:1228px;top:799px;font-size:18px;line-height:26px;font-weight:bold;color:#222">日志</div>
<div class="a" style="left:1311px;top:799px;font-size:18px;line-height:26px;font-weight:bold;color:#777">错误</div>
<div id="logp" class="a">
<div class="lg" style="top:13.50px"><span class="ld">2019-01-01 00:00:00</span> - <span class="li">INFO  </span>- <i>初</i><i>始</i><i>函</i><i>数</i><i>开</i><i>始</i><i>运</i><i>行</i><i>且</i><i>全</i><i>局</i><i>只</i><i>运</i><i>行</i><i>一</i><i>次</i></div>
<div class="lg" style="top:39.15px"><span class="ld">2019-01-02 09:00:00</span> - <span class="li">INFO  </span>- <i>函</i><i>数</i><i>运</i><i>行</i><i>时</i><i>间</i>(before_market_open)<i>：</i>09:00:00</div>
<div class="lg" style="top:64.80px"><span class="ld">2019-01-02 09:30:00</span> - <span class="li">INFO  </span>- <i>函</i><i>数</i><i>运</i><i>行</i><i>时</i><i>间</i>(market_open):09:30:00</div>
<div class="lg" style="top:90.45px"><span class="ld">2019-01-02 15:30:00</span> - <span class="li">INFO  </span>- <i>函</i><i>数</i><i>运</i><i>行</i><i>时</i><i>间</i>(after_market_close):15:30:00</div>
<div class="lg" style="top:116.10px"><span class="ld">2019-01-02 15:30:00</span> - <span class="li">INFO  </span>- <i>一</i><i>天</i><i>结</i><i>束</i></div>
<div class="lg" style="top:141.75px"><span class="ld">2019-01-02 15:30:00</span> - <span class="li">INFO  </span>- ##############################################################</div>
<div class="lg" style="top:167.40px"><span class="ld">2019-01-03 09:00:00</span> - <span class="li">INFO  </span>- <i>函</i><i>数</i><i>运</i><i>行</i><i>时</i><i>间</i>(before_market_open)<i>：</i>09:00:00</div>
<div class="lg" style="top:193.05px"><span class="ld">2019-01-03 09:30:00</span> - <span class="li">INFO  </span>- <i>函</i><i>数</i><i>运</i><i>行</i><i>时</i><i>间</i>(market_open):09:30:00</div>
<div class="lg" style="top:218.70px"><span class="ld">2019-01-03 09:30:00</span> - <span class="lw">WARNING </span>- Security(code=000001.XSHE) <i>在</i> positions <i>中</i><i>不</i><i>存</i><i>在</i><i>，</i><i>为</i><i>了</i><i>保</i><i>持</i><i>兼</i><i>容</i><i>，</i><i>我</i><i>们</i><i>返</i><i>回</i><i>空</i><i>的</i> Position <i>对</i><i>象</i><i>，</i>amount/pri</div>
<div class="lg" style="top:244.35px">ce/avg_cost/acc_avg_cost <i>都</i><i>是</i> 0</div>
<div class="lg" style="top:270.00px"><span class="ld">2019-01-03 15:30:00</span> - <span class="li">INFO  </span>- <i>函</i><i>数</i><i>运</i><i>行</i><i>时</i><i>间</i>(after_market_close):15:30:00</div>
<div class="lg" style="top:295.65px"><span class="ld">2019-01-03 15:30:00</span> - <span class="li">INFO  </span>- <i>一</i><i>天</i><i>结</i><i>束</i></div>
<div class="lg" style="top:321.30px"><span class="ld">2019-01-03 15:30:00</span> - <span class="li">INFO  </span>- ##############################################################</div>
<div class="lg" style="top:346.95px"><span class="ld">2019-01-04 09:00:00</span> - <span class="li">INFO  </span>- <i>函</i><i>数</i><i>运</i><i>行</i><i>时</i><i>间</i>(before_market_open)<i>：</i>09:00:00</div>
<div class="lg" style="top:372.60px"><span class="ld">2019-01-04 09:30:00</span> - <span class="li">INFO  </span>- <i>函</i><i>数</i><i>运</i><i>行</i><i>时</i><i>间</i>(market_open):09:30:00</div>
</div>
<div class="a" style="left:2520px;top:840px;width:25px;height:389px;background:#f0f0f0"></div>
<div class="a" style="left:2522px;top:866px;width:21px;height:24px;background:#c1c1c1"></div>
<div class="a" style="left:2541px;top:53px;width:18px;height:96px;border-radius:9px;box-shadow:0 0 6px rgba(0,0,0,0.07)"></div>
<div class="a" style="left:2545px;top:57px;width:11px;height:35px;border-radius:6px 6px 0 0;background:linear-gradient(#565e82,#8a90a8 55%,#ededf0)"></div>
<div class="a" style="left:2545px;top:75px;width:11px;height:15px;background:#ececee"></div>
<div class="a" style="left:2545px;top:90px;width:11px;height:54px;border-radius:0 0 6px 6px;background:linear-gradient(#00e07a,#18a8f0)"></div>
<svg class="a" width="25" height="20" style="left:2520px;top:844px"><polygon points="6.5,14 18.5,14 12.5,8" fill="#a3a3a3"/></svg>
<svg class="a" width="25" height="20" style="left:2520px;top:1210px"><polygon points="6.5,6 18.5,6 12.5,12" fill="#505050"/></svg>

</body></html>
